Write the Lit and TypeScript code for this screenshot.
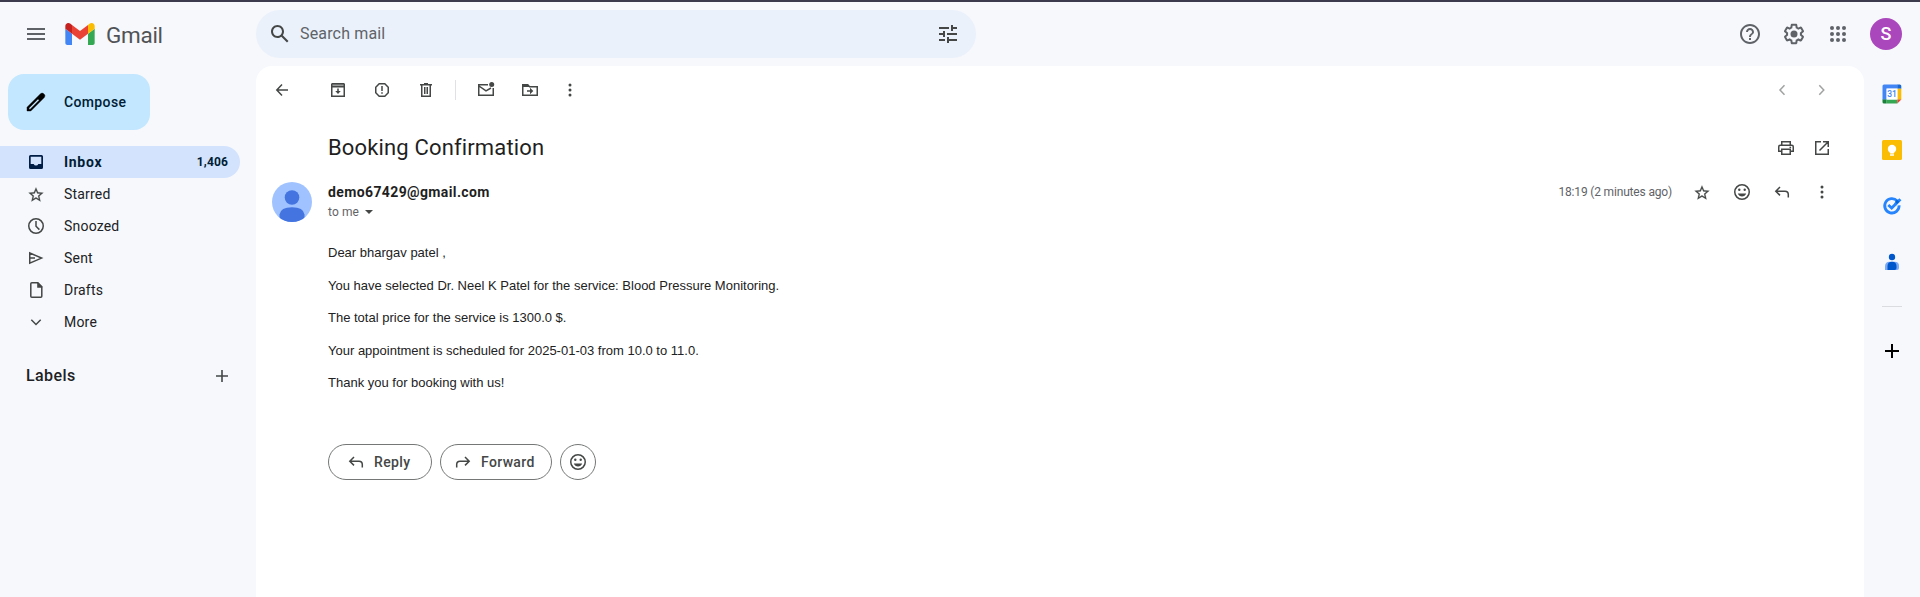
import { LitElement, html, svg, css } from "lit";
import { customElement, property } from "lit/decorators.js";

const line = (d: string, w = 1.5) => svg`<path d=${d} fill="none" stroke="currentColor" stroke-width=${w}></path>`;
const fill = (d: string) => svg`<path d=${d} fill="currentColor"></path>`;
const STAR = "M22 9.24l-7.19-.62L12 2 9.19 8.63 2 9.24l5.46 4.73L5.82 21 12 17.27 18.18 21l-1.63-7.03L22 9.24zM12 15.4l-3.76 2.27 1-4.28-3.32-2.88 4.38-.38L12 6.1l1.71 4.04 4.38.38-3.32 2.88 1 4.28L12 15.4z";

// Glyphs drawn on a 20 unit grid.
const small: Record<string, unknown> = {
  back: line("M16 10H5M10 4.5L4.8 10l5.2 5.5"),
  archive: svg`<path d="M4 4h12v2.5H4z" fill="#9a9c9b"></path>${line("M4.25 3.75h11.5l.5.5v12H3.75v-12zM3.75 6.75h12.5")}${fill("M9.25 8.5h1.5V11h2L10 14l-2.75-3h2z")}`,
  spam: svg`${line("M7.2 3.75h5.6l3.45 3.45v5.6l-3.45 3.45H7.2L3.75 12.8V7.2z")}${fill("M9.25 6h1.5v5h-1.5zM9.25 12.2h1.5v1.6h-1.5z")}`,
  trash: svg`${line("M5.75 5v11.25h8.5V5M4 4.75h12M8 3.75h4")}${line("M8.75 7v7M11.25 7v7")}`,
  unread: svg`${line("M12 4.75H2.75v10.5h14.5V8M3 6l7 4.8L15 8")}<circle cx="15.7" cy="4.5" r="2.5" fill="currentColor"></circle>`,
  move: svg`${line("M2.75 4.75h5l1.8 2h7.7v8.5H2.75z")}${fill("M2.5 4.5h5.3L9.5 7h-7zM10 7.8l3.3 3.2-3.3 3.2v-2.5H7v-1.4h3z")}`,
  more: svg`<g fill="currentColor"><circle cx="10" cy="5" r="1.5"></circle><circle cx="10" cy="10" r="1.5"></circle><circle cx="10" cy="15" r="1.5"></circle></g>`,
  prev: line("M12.5 5.2L8 10l4.5 4.8"),
  next: line("M7.300 5.2l4.5 4.8-4.5 4.8"),
  print: svg`${line("M5.75 7V3.75h8.5V7M5.5 13.25H2.75v-4.5q0-1.5 1.5-1.5h11.5q1.5 0 1.5 1.5v4.5H14.5M5.75 11.25h8.5v5h-8.5z")}${fill("M13.5 8.7h1.6v1.4h-1.6z")}`,
  open: line("M9 3.75H3.75v12.5h12.5V11M11 3.75h5.25V9M16 4l-8.5 8.5"),
  star: svg`<g transform="translate(1.1 1.9) scale(.74)" stroke="currentColor" stroke-width=".25">${fill(STAR)}</g>`,
  smile: svg`<circle cx="10" cy="10" r="7.25" fill="none" stroke="currentColor" stroke-width="1.5"></circle><circle cx="7.3" cy="7.8" r="1.2" fill="currentColor"></circle><circle cx="12.7" cy="7.8" r="1.2" fill="currentColor"></circle>${fill("M5.8 11.5h8.4Q13 14.5 10 14.5T5.8 11.5z")}`,
  reply: line("M16.3 15.5v-3q0-3.3-3.3-3.3H4.5M8 5L3.8 9.2 8 13.4"),
  forward: line("M3.7 15.5v-3q0-3.3 3.3-3.3h8.5M12 5l4.2 4.2-4.2 4.2"),
  inbox: svg`<path d="M4.5 3h11q1.500 0 1.500 1.500v11q0 1.500-1.500 1.500h-11q-1.500 0-1.500-1.500v-11q0-1.500 1.500-1.500zM4.700 4.700v7.300h3q.6 1.500 2.300 1.500t2.300-1.500h3V4.700z" fill-rule="evenodd" fill="currentColor"></path>`,
  clock: svg`<circle cx="10" cy="10" r="7.25" fill="none" stroke="currentColor" stroke-width="1.500"></circle>${line("M10 5v5.200l3.400 3.400")}`,
  send: line("M3.750 5v10.200L15.600 10.100zM4 10.100h5"),
  draft: svg`${line("M5.800 2.750h6l4 4v9.500q0 1-1 1h-9q-1 0-1-1v-12.500q0-1 1-1z")}${fill("M11.200 2.500h1l4 4v1.300h-5z")}`,
  down: line("M5.300 7.800L10 12.500l4.700-4.700"),
  plus: line("M10 4v12M4 10h12", 1.600),
  add: line("M10 3v14M3 10h14", 2),
};

// Glyphs drawn on a 24 unit grid.
const large: Record<string, unknown> = {
  menu: fill("M3 18h18v-2H3v2zm0-5h18v-2H3v2zm0-7v2h18V6H3z"),
  search: fill("M20.490 19l-5.730-5.730C15.530 12.200 16 10.910 16 9.500 16 5.910 13.090 3 9.500 3S3 5.910 3 9.500 5.910 16 9.500 16c1.410 0 2.700-.470 3.770-1.240L19 20.490 20.490 19zM5 9.500C5 7.010 7.010 5 9.500 5S14 7.010 14 9.500 11.990 14 9.500 14 5 11.990 5 9.500z"),
  tune: fill("M3 17v2h6v-2H3zM3 5v2h10V5H3zm10 16v-2h8v-2h-8v-2h-2v6h2zM7 9v2H3v2h4v2h2V9H7zm14 4v-2H11v2h10zm-6-4h2V7h4V5h-4V3h-2v6z"),
  help: fill("M11 18h2v-2h-2v2zm1-16C6.480 2 2 6.480 2 12s4.480 10 10 10 10-4.480 10-10S17.520 2 12 2zm0 18c-4.410 0-8-3.590-8-8s3.590-8 8-8 8 3.590 8 8-3.590 8-8 8zm0-14c-2.210 0-4 1.790-4 4h2c0-1.100.900-2 2-2s2 .900 2 2c0 2-3 1.750-3 5h2c0-2.250 3-2.500 3-5 0-2.210-1.790-4-4-4z"),
  gear: svg`${fill("M13.850 22.250h-3.700c-.740 0-1.360-.540-1.450-1.270l-.270-1.890c-.270-.140-.530-.290-.790-.460l-1.800.720c-.700.260-1.470-.030-1.810-.650L2.200 15.530c-.350-.660-.200-1.440.360-1.880l1.530-1.190c-.010-.150-.020-.300-.020-.460 0-.150.010-.310.020-.460l-1.520-1.190c-.590-.450-.740-1.260-.370-1.880l1.850-3.190c.340-.620 1.110-.900 1.790-.630l1.810.730c.260-.170.520-.320.780-.460l.270-1.910c.090-.700.710-1.250 1.440-1.250h3.700c.740 0 1.360.540 1.450 1.270l.270 1.890c.270.140.530.290.790.460l1.800-.720c.710-.260 1.480.030 1.820.650l1.840 3.180c.360.660.200 1.440-.360 1.880l-1.520 1.190c.010.150.020.300.020.460s-.010.310-.020.460l1.520 1.190c.560.450.720 1.230.370 1.860l-1.860 3.220c-.340.620-1.110.900-1.800.630l-1.800-.720c-.260.170-.520.320-.780.460l-.270 1.910c-.100.680-.720 1.220-1.460 1.220zm-3.230-2h2.760l.370-2.550.530-.220c.440-.180.880-.440 1.340-.780l.450-.340 2.380.960 1.380-2.400-2.030-1.580.070-.560c.030-.260.060-.510.060-.780s-.030-.530-.060-.780l-.070-.560 2.030-1.580-1.390-2.400-2.390.960-.450-.350c-.420-.320-.870-.580-1.330-.770l-.520-.220-.370-2.550h-2.760l-.370 2.550-.530.210c-.440.190-.880.440-1.340.790l-.450.330-2.380-.950-1.390 2.390 2.030 1.580-.070.560a7 7 0 0 0-.060.790c0 .260.020.530.060.780l.070.560-2.030 1.580 1.380 2.400 2.390-.960.450.350c.430.330.860.580 1.330.770l.530.220.380 2.550z")}<circle cx="12" cy="12" r="3.500" fill="currentColor"></circle>`,
  apps: svg`<g fill="currentColor">${[6, 12, 18].map(y => [6, 12, 18].map(x => svg`<circle cx=${x} cy=${y} r="2"></circle>`))}</g>`,
  pencil: svg`<path d="M3 17.200V21h3.800L20.300 7.500q1.400-1.700 0-3.200l-.6-.6q-1.600-1.300-3.200 0zM5 18l9-9 1.200 1.200-9 9H5z" fill-rule="evenodd" fill="#000" stroke="#000" stroke-width=".4"></path>`,
};

@customElement("ui-icon")
class UiIcon extends LitElement {
  @property() name = "";
  static styles = css`
    :host { display: block; flex: none; }
    svg { display: block; }
  `;
  render() {
    const big = this.name in large;
    const s = big ? 24 : 20;
    return html`<svg width=${s} height=${s} viewBox="0 0 ${s} ${s}">${big ? large[this.name] : small[this.name]}</svg>`;
  }
}

const FOLDERS = [
  ["star", "Starred"], ["clock", "Snoozed"], ["send", "Sent"], ["draft", "Drafts"], ["down", "More"],
];
const BODY = [
  "Dear bhargav patel ,",
  "You have selected Dr. Neel K Patel for the service: Blood Pressure Monitoring.",
  "The total price for the service is 1300.0 $.",
  "Your appointment is scheduled for 2025-01-03 from 10.0 to 11.0.",
  "Thank you for booking with us!",
];

@customElement("app-root")
class AppRoot extends LitElement {
  static styles = css`
    :host {
      display: flex; flex-direction: column; box-sizing: border-box; height: 597px;
      border-top: 2px solid #3b3b4d; background: #f6f8fc; overflow: hidden;
      font: 14px/20px Roboto, sans-serif; color: #202124;
    }
    * { box-sizing: border-box; }
    header { height: 64px; flex: none; display: flex; align-items: center; color: #5f6368; }
    .brand { width: 256px; padding-left: 24px; display: flex; align-items: center; }
    .logo { margin-left: 17px; display: block; }
    .brand-name { margin: 2px 0 0 11px; font-size: 22.5px; line-height: 28px; color: #505356; letter-spacing: -.3px; }
    .search { width: 720px; height: 48px; border-radius: 24px; background: #eaf1fb; display: flex; align-items: center; padding: 0 16px 0 12px; color: #444746; }
    .search span { flex: 1; margin: 0 0 0 8px; font-size: 16px; color: #5f6368; letter-spacing: .16px; }
    .tools { margin-left: auto; display: flex; align-items: center; gap: 20px; padding-right: 18px; }
    .account { width: 32px; height: 32px; border-radius: 50%; background: #ab47bc; color: #fff; display: grid; place-items: center; font-size: 18px; font-weight: 500; }
    .content { flex: 1; min-height: 0; display: flex; }
    nav { width: 256px; flex: none; padding-top: 8px; color: #444746; }
    .compose { width: 142px; height: 56px; margin-left: 8px; padding-left: 16px; border-radius: 16px; background: #c2e7ff; display: flex; align-items: center; gap: 16px; color: #001d35; font-weight: 500; letter-spacing: .36px; }
    .folders { margin-top: 16px; }
    .folder { width: 240px; height: 32px; padding: 0 12px 0 26px; display: flex; align-items: center; gap: 18px; }
    .folder span { color: #202124; letter-spacing: .2px; }
    .folder.active { background: #d3e3fd; border-radius: 0 16px 16px 0; color: #001d46; }
    .folder.active .label { font-weight: 700; color: #001d35; letter-spacing: .7px; }
    .folder.active .count { margin-left: auto; font-size: 12px; font-weight: 700; color: #001d35; letter-spacing: .15px; }
    .labels { margin-top: 18px; height: 40px; padding: 0 24px 0 26px; display: flex; align-items: center; justify-content: space-between; font-size: 16px; font-weight: 500; letter-spacing: .42px; color: #202124; }
    .labels ui-icon { color: #444746; }
    main { flex: 1; background: #fff; border-radius: 16px 16px 0 0; color: #444746; }
    .toolbar { height: 48px; display: flex; align-items: center; padding: 0 32px 0 16px; gap: 24px; }
    .toolbar .first { margin-right: 12px; }
    .toolbar .last { margin-left: -4px; }
    .sep { width: 1px; height: 20px; background: #dfe1e5; margin: 0 -4px 0 -5px; }
    .pager { margin-left: auto; display: flex; gap: 20px; color: #a0a2a1; }
    .subject { height: 60px; margin-top: 4px; padding: 0 32px 0 72px; display: flex; align-items: center; }
    .subject h2 { margin: 0; flex: 1; font-size: 22px; line-height: 28px; font-weight: 400; color: #1f1f1f; letter-spacing: .15px; }
    .subject .acts { display: flex; gap: 16px; }
    .message { display: flex; padding: 4px 32px 0 16px; }
    .person { display: block; flex: none; margin-right: 16px; }
    .who { flex: 1; }
    .from { font-weight: 700; color: #1f1f1f; letter-spacing: .38px; }
    .to { display: flex; align-items: center; font-size: 12px; color: #5f6368; gap: 6px; letter-spacing: .1px; }
    .caret { border: 4px solid transparent; border-top-color: #444746; border-bottom: 0; }
    .meta { display: flex; align-items: center; height: 20px; gap: 20px; }
    .time { font-size: 12px; color: #5f6368; letter-spacing: -.17px; }
    .body { margin: 21px 0 0 72px; font: 13px/19.5px "Liberation Sans", Arial, sans-serif; color: #222; }
    .body p { margin: 0 0 13px; }
    .replies { margin: 51px 0 0 72px; display: flex; gap: 8px; }
    .pill { height: 36px; border: 1px solid #747775; border-radius: 18px; display: flex; align-items: center; gap: 8px; padding-left: 17px; font-weight: 500; letter-spacing: .35px; }
    .reply { width: 104px; }
    .fwd { width: 112px; padding-left: 12px; }
    .react { width: 36px; padding-left: 7px; }
    aside { width: 56px; flex: none; display: flex; flex-direction: column; align-items: center; padding-top: 18px; color: #000; }
    aside svg { display: block; margin-bottom: 36px; flex: none; }
    .rule { width: 20px; height: 1px; background: #dadce0; margin: -2px 0 34px; }
  `;

  render() {
    return html`
      <header>
        <div class="brand">
          <ui-icon name="menu"></ui-icon>
          <svg class="logo" width="30" height="22" viewBox="52 42 88 66">
            <path fill="#4285f4" d="M58 108h14V74L52 59v43c0 3.320 2.690 6 6 6"></path>
            <path fill="#34a853" d="M120 108h14c3.320 0 6-2.690 6-6V59l-20 15"></path>
            <path fill="#fbbc04" d="M120 48v26l20-15v-8c0-7.420-8.470-11.650-14.400-7.200"></path>
            <path fill="#ea4335" d="M72 74V48l24 18 24-18v26L96 92"></path>
            <path fill="#c5221f" d="M52 51v8l20 15V48l-5.600-4.200c-5.940-4.450-14.400-.220-14.400 7.200"></path>
          </svg>
          <span class="brand-name">Gmail</span>
        </div>
        <div class="search"><ui-icon name="search"></ui-icon><span>Search mail</span><ui-icon name="tune"></ui-icon></div>
        <div class="tools">
          <ui-icon name="help"></ui-icon><ui-icon name="gear"></ui-icon><ui-icon name="apps"></ui-icon>
          <div class="account">S</div>
        </div>
      </header>
      <div class="content">
        <nav>
          <div class="compose"><ui-icon name="pencil"></ui-icon>Compose</div>
          <div class="folders">
            <div class="folder active"><ui-icon name="inbox"></ui-icon><span class="label">Inbox</span><span class="count">1,406</span></div>
            ${FOLDERS.map(([icon, name]) => html`<div class="folder"><ui-icon name=${icon}></ui-icon><span>${name}</span></div>`)}
          </div>
          <div class="labels">Labels<ui-icon name="plus"></ui-icon></div>
        </nav>
        <main>
          <div class="toolbar">
            <ui-icon class="first" name="back"></ui-icon>
            <ui-icon name="archive"></ui-icon><ui-icon name="spam"></ui-icon><ui-icon name="trash"></ui-icon>
            <div class="sep"></div>
            <ui-icon name="unread"></ui-icon><ui-icon name="move"></ui-icon><ui-icon class="last" name="more"></ui-icon>
            <div class="pager"><ui-icon name="prev"></ui-icon><ui-icon name="next"></ui-icon></div>
          </div>
          <div class="subject">
            <h2>Booking Confirmation</h2>
            <div class="acts"><ui-icon name="print"></ui-icon><ui-icon name="open"></ui-icon></div>
          </div>
          <div class="message">
            <svg class="person" width="40" height="40" viewBox="0 0 40 40">
              <clipPath id="round"><circle cx="20" cy="20" r="20"></circle></clipPath>
              <g clip-path="url(#round)">
                <path fill="#a0c3ff" d="M0 0h40v40H0z"></path>
                <circle cx="20" cy="15.500" r="7.300" fill="#4374e0"></circle>
                <path fill="#4374e0" d="M7.500 40v-7.500Q8.500 25.300 20 25.300t12.500 7.200V40z"></path>
              </g>
            </svg>
            <div class="who">
              <div class="from">demo67429@gmail.com</div>
              <div class="to">to me<i class="caret"></i></div>
            </div>
            <div class="meta">
              <span class="time">18:19 (2 minutes ago)</span>
              <ui-icon name="star"></ui-icon><ui-icon name="smile"></ui-icon><ui-icon name="reply"></ui-icon><ui-icon name="more"></ui-icon>
            </div>
          </div>
          <div class="body">${BODY.map(p => html`<p>${p}</p>`)}</div>
          <div class="replies">
            <div class="pill reply"><ui-icon name="reply"></ui-icon>Reply</div>
            <div class="pill fwd"><ui-icon name="forward"></ui-icon>Forward</div>
            <div class="pill react"><ui-icon name="smile"></ui-icon></div>
          </div>
        </main>
        <aside>
          <svg width="20" height="20" viewBox="0 0 20 20">
            <path fill="#4285f4" d="M2 .500h13.500v4.200H4.700v11H.500V2Q.500.500 2 .500z"></path>
            <path fill="#1967d2" d="M15.300.500h2.500q1.500 0 1.500 1.500v2.700h-4z"></path>
            <path fill="#fbbc04" d="M15.300 4.700h4v11h-4z"></path>
            <path fill="#34a853" d="M4.500 15.500h10.800v4H4.500z"></path>
            <path fill="#188038" d="M.500 15.500h4v4H2Q.500 19.500.500 18z"></path>
            <path fill="#ea4335" d="M15.300 15.500h4l-4 4z"></path>
            <path fill="#fff" d="M4.500 4.500h11v11h-11z"></path>
            <text x="10" y="13.300" font-size="8.500" font-weight="500" text-anchor="middle" fill="#4285f4">31</text>
          </svg>
          <svg width="20" height="20" viewBox="0 0 20 20">
            <rect width="20" height="20" rx="1.500" fill="#fbbc04"></rect>
            <circle cx="10" cy="9" r="4.200" fill="#fff"></circle>
            <path fill="#fff" d="M8 12h4v1.500H8zM8 14.300h4v1.400H8z"></path>
          </svg>
          <svg width="20" height="20" viewBox="0 0 20 20">
            <g transform="translate(0 -.8)">
              <path d="M15.200 5.700A7.200 7.200 0 1 0 17.100 10.200" fill="none" stroke="#2684fc" stroke-width="2.800"></path>
              <path d="M6.300 9.700l3.400 3.200L14 8.500" fill="none" stroke="#2684fc" stroke-width="2.800"></path>
              <path d="M13.200 9.200l5.200-5.200" fill="none" stroke="#2684fc" stroke-width="3"></path>
              <path d="M13 6.500l2-2 2.300 2-2.300 2.300z" fill="#0066da"></path>
            </g>
          </svg>
          <svg width="20" height="20" viewBox="0 0 20 20">
            <circle cx="10" cy="5" r="3.200" fill="#0057cc"></circle>
            <path d="M3 18v-3.500Q3 9.700 7.500 9.700h5Q17 9.700 17 13.500V16q0 2-2 2z" fill="#7baaf7"></path>
            <path d="M5.500 18v-4q0-4.300 4.500-4.300t4.500 4.300v2q0 2-2 2z" fill="#0057cc"></path>
          </svg>
          <div class="rule"></div>
          <ui-icon name="add"></ui-icon>
        </aside>
      </div>
    `;
  }
}
